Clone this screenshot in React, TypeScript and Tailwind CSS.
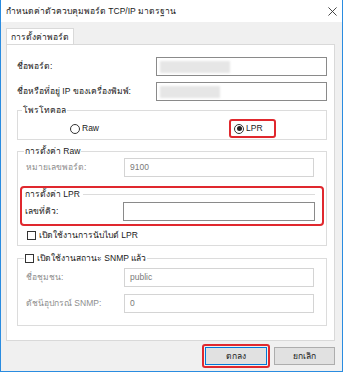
import type { ReactNode } from "react";

const FONT = { fontFamily: "'Liberation Sans', 'Noto Sans', 'DejaVu Sans', sans-serif" };

function Field({ value, muted, blur, blurWidth }: { value?: string; muted?: boolean; blur?: boolean; blurWidth?: string }) {
  return (
    <div
      className={`flex h-[19px] flex-1 items-center bg-white px-[3px] ${
        muted ? "border border-[#d4d4d4] text-[#7a7a7a]" : "border border-[#8a8a8a] text-[#1a1a1a]"
      }`}
    >
      {blur && <div className={`h-[12px] ${blurWidth} bg-[#e6e6e6] blur-[1px]`} />}
      {value && <span className="pl-[2px]">{value}</span>}
    </div>
  );
}

function Group({ legend, children, className = "" }: { legend: ReactNode; children: ReactNode; className?: string }) {
  return (
    <fieldset className={`border border-[#dcdcdc] ${className}`}>
      <legend className="ml-[4px] px-[1px] leading-[12px]">{legend}</legend>
      {children}
    </fieldset>
  );
}

function Radio({ label, checked }: { label: string; checked?: boolean }) {
  return (
    <div className="flex items-center gap-[2px]">
      <span className="flex h-[10px] w-[10px] items-center justify-center rounded-full border border-[#333]">
        {checked && <span className="h-[5px] w-[5px] rounded-full bg-[#222]" />}
      </span>
      <span>{label}</span>
    </div>
  );
}

function Check({ label }: { label: string }) {
  return (
    <div className="flex items-center gap-[3px]">
      <span className="h-[9px] w-[9px] border border-[#333] bg-white" />
      <span>{label}</span>
    </div>
  );
}

export default function App() {
  return (
    <div className="bg-white" style={FONT}>
      <div className="flex h-[372px] w-[343px] flex-col border-x border-b border-[#2a8ce0] text-[8.5px] text-[#1a1a1a]">
        {/* title bar */}
        <div className="flex h-[22px] shrink-0 items-center justify-between bg-white pl-[5px] pr-[5px]">
          <span>กำหนดค่าตัวควบคุมพอร์ต TCP/IP มาตรฐาน</span>
          <svg viewBox="0 0 10 10" className="h-[9px] w-[9px]" fill="none" stroke="#333" strokeWidth="1">
            <path d="M0.5 0.5l9 9M9.5 0.5l-9 9" />
          </svg>
        </div>

        <div className="flex flex-1 flex-col bg-[#f0f0f0] pl-[5px] pr-[7px]">
          {/* tab strip */}
          <div className="mt-[6px] flex">
            <div className="flex h-[17px] items-center justify-center whitespace-nowrap border border-b-0 border-[#d9d9d9] bg-white px-[4px]">
              การตั้งค่าพอร์ต
            </div>
          </div>

          {/* tab panel */}
          <div className="-mt-px flex h-[297px] flex-col border border-[#d9d9d9] bg-white pl-[10px] pr-[7px] pt-[12px]">
            <div className="flex items-center">
              <span className="w-[139px]">ชื่อพอร์ต:</span>
              <Field blur blurWidth="w-[70px]" />
            </div>
            <div className="mt-[6px] flex items-center">
              <span className="w-[139px]">ชื่อหรือที่อยู่ IP ของเครื่องพิมพ์:</span>
              <Field blur blurWidth="w-[60px]" />
            </div>

            <Group legend="โพรโทคอล" className="mt-[3px] h-[36px]">
              <div className="flex items-center pt-[3px]">
                <div className="ml-[52px]">
                  <Radio label="Raw" />
                </div>
                <div className="ml-[130px] flex h-[19px] w-[47px] items-center rounded-[3px] border-2 border-[#e0282e] pl-[3px]">
                  <Radio label="LPR" checked />
                </div>
              </div>
            </Group>

            <Group legend="การตั้งค่า Raw" className="mt-[5px] h-[101px] px-[2px]">
              <div className="flex items-center pl-[6px] pr-[10px] pt-[1px] text-[#8e8e8e]">
                <span className="w-[98px]">หมายเลขพอร์ต:</span>
                <Field value="9100" muted />
              </div>
              <div className="mt-[9px] rounded-[4px] border-2 border-[#e0282e] pb-[3px] pl-[3px] pr-[7px]">
                <div className="flex items-center">
                  <span className="leading-[12px]">การตั้งค่า LPR</span>
                  <span className="ml-[3px] h-px flex-1 bg-[#dcdcdc]" />
                </div>
                <div className="mt-[2px] flex items-center">
                  <span className="w-[98px]">เลขที่คิว:</span>
                  <Field />
                </div>
              </div>
              <div className="mt-[3px] pl-[7px]">
                <Check label="เปิดใช้งานการนับไบต์ LPR" />
              </div>
            </Group>

            <Group legend={<Check label="เปิดใช้งานสถานะ SNMP แล้ว" />} className="mt-[6px] h-[74px] px-[2px]">
              <div className="flex flex-col gap-[7px] pl-[6px] pr-[10px] pt-[4px] text-[#8e8e8e]">
                <div className="flex items-center">
                  <span className="w-[98px]">ชื่อชุมชน:</span>
                  <Field value="public" muted />
                </div>
                <div className="flex items-center">
                  <span className="w-[98px]">ดัชนีอุปกรณ์ SNMP:</span>
                  <Field value="0" muted />
                </div>
              </div>
            </Group>
          </div>

          {/* buttons */}
          <div className="mt-[3px] flex justify-end gap-[4px]">
            <div className="rounded-[3px] border-2 border-[#e0282e] p-px">
              <button className="flex h-[18px] w-[62px] items-center justify-center border border-[#0078d7] bg-[#e1e1e1]">
                ตกลง
              </button>
            </div>
            <div className="pt-[3px]">
              <button className="flex h-[18px] w-[61px] items-center justify-center border border-[#adadad] bg-[#e1e1e1]">
                ยกเลิก
              </button>
            </div>
          </div>
        </div>
      </div>
    </div>
  );
}
